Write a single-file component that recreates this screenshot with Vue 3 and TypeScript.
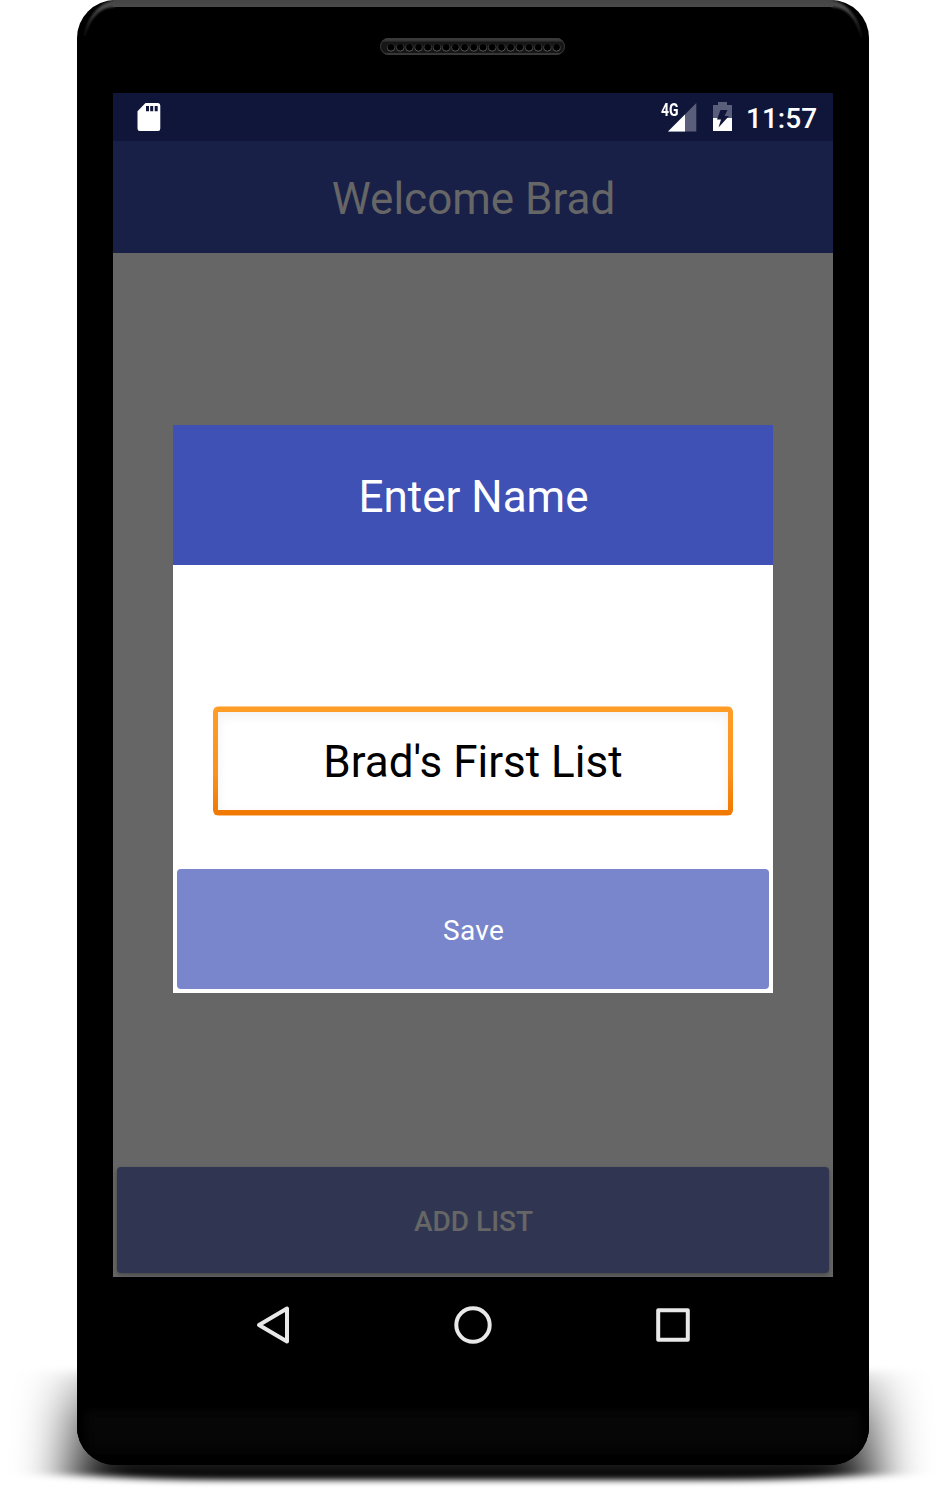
<script setup lang="ts">
import { ref } from 'vue'

const userName = ref('Brad')
const listName = ref("Brad's First List")
const speakerHoles: number[] = Array.from({ length: 19 }, (_, i) => 11 + i * 9.2)
</script>

<template>
  <main class="stage">
    <svg class="ground-shadow" width="945" height="190" viewBox="0 0 945 190" aria-hidden="true">
      <defs>
        <linearGradient id="fall" x1="0" y1="66" x2="0" y2="180" gradientUnits="userSpaceOnUse">
          <stop offset="0" stop-color="#000" stop-opacity="0.04" />
          <stop offset="0.15" stop-color="#000" stop-opacity="0.28" />
          <stop offset="0.5" stop-color="#000" stop-opacity="0.66" />
          <stop offset="1" stop-color="#000" stop-opacity="1" />
        </linearGradient>
        <filter id="soften" x="-100" y="0" width="1145" height="190" filterUnits="userSpaceOnUse">
          <feGaussianBlur stdDeviation="27 3.2" />
        </filter>
      </defs>
      <path d="M73 70 H872 V174 C800 181 740 180 680 180 H265 C205 180 145 181 73 174Z" fill="url(#fall)" filter="url(#soften)" />
    </svg>

    <div class="phone">
      <svg class="rim" width="792" height="50" viewBox="0 0 792 50" aria-hidden="true">
        <defs>
          <linearGradient id="rimFill" x1="0" y1="0" x2="0" y2="44" gradientUnits="userSpaceOnUse">
            <stop offset="0" stop-color="#444" />
            <stop offset="0.18" stop-color="#4b4b4b" />
            <stop offset="0.5" stop-color="#303030" />
            <stop offset="1" stop-color="#000" />
          </linearGradient>
          <filter id="rimBlur"><feGaussianBlur stdDeviation="0.8" /></filter>
        </defs>
        <path d="M36 0H756V7H36Z" fill="url(#rimFill)" />
        <path d="M38 0C24 1 7 18 7 42C11 21 21 7 38 7Z" fill="url(#rimFill)" filter="url(#rimBlur)" />
        <path d="M754 0C768 1 785 18 785 42C781 21 771 7 754 7Z" fill="url(#rimFill)" filter="url(#rimBlur)" />
      </svg>

      <div class="speaker">
        <svg width="185" height="17" viewBox="0 0 185 17" aria-hidden="true">
          <defs>
            <linearGradient id="slot" x1="0" y1="0" x2="0" y2="1">
              <stop offset="0" stop-color="#444" />
              <stop offset="0.18" stop-color="#303030" />
              <stop offset="0.25" stop-color="#161616" />
              <stop offset="0.85" stop-color="#151515" />
              <stop offset="0.92" stop-color="#3c3c3c" />
              <stop offset="1" stop-color="#2a2a2a" />
            </linearGradient>
            <linearGradient id="hole" x1="0" y1="0" x2="0" y2="1">
              <stop offset="0" stop-color="#1c1c1c" />
              <stop offset="1" stop-color="#5a5a5a" />
            </linearGradient>
          </defs>
          <rect width="185" height="17" rx="8.5" fill="url(#slot)" />
          <rect x="0.5" y="0.5" width="184" height="16" rx="8" fill="none" stroke="#383838" />
          <circle
            v-for="x in speakerHoles"
            :key="x"
            :cx="x"
            cy="9.3"
            r="3.9"
            fill="#000"
            stroke="url(#hole)"
            stroke-width="1"
          />
        </svg>
      </div>

      <section class="screen">
        <div class="status-bar">
          <svg class="sd" width="24" height="28" viewBox="0 0 24 28" aria-hidden="true">
            <path fill="#fff" fill-rule="evenodd" d="M8.500 0H21Q23.300 0 23.300 2.500V25.500Q23.300 28 21 28H2.800Q0.500 28 0.500 25.500V8.300ZM9 3V8.300H12V3ZM13.200 3V8.300H16.200V3ZM17.700 3V8.300H20.700V3Z" />
          </svg>
          <div class="signal">
            <svg width="29" height="29" viewBox="0 0 29 29" aria-hidden="true">
              <path d="M28.300 0V28.500H0Z" fill="#5b5e7b" />
              <path d="M17 11.400V28.500H0Z" fill="#fff" />
            </svg>
            <span class="network">4G</span>
          </div>
          <svg class="battery" width="19" height="29" viewBox="0 0 19 29" aria-hidden="true">
            <path d="M5 0H14V3H19V16H0V3H5Z" fill="#5b5e7b" />
            <path d="M0 16H19V29H0Z" fill="#fff" />
            <path d="M7.500 8H14.500L11.500 14H16L5.500 25.500L8 17.500H4Z" fill="#10163a" />
          </svg>
          <time class="clock">11:57</time>
        </div>

        <header class="app-bar">Welcome {{ userName }}</header>

        <div class="content">
          <div class="dialog">
            <h2 class="dialog-title">Enter Name</h2>
            <div class="dialog-body">
              <div class="field"><input v-model="listName" type="text" aria-label="Name" /></div>
            </div>
            <button class="save" type="button">Save</button>
          </div>
        </div>

        <div class="footer"><button class="add" type="button">ADD LIST</button></div>
      </section>

      <nav class="nav-bar">
        <svg width="40" height="40" viewBox="0 0 40 40" aria-hidden="true">
          <path d="M6 20L34 3.500V36.500Z" />
        </svg>
        <svg width="40" height="40" viewBox="0 0 40 40" aria-hidden="true">
          <circle cx="20" cy="20" r="16.700" />
        </svg>
        <svg width="40" height="40" viewBox="0 0 40 40" aria-hidden="true">
          <rect x="5.200" y="5.200" width="29.600" height="29.600" />
        </svg>
      </nav>
      <div class="chin"></div>
    </div>
  </main>
</template>

<style>
body {
  margin: 0;
  background: #fff;
}
</style>

<style scoped>
.stage {
  position: relative;
  width: 945px;
  height: 1490px;
  overflow: hidden;
  background: #fff;
  font-family: Roboto, "Noto Sans", sans-serif;
}
.ground-shadow {
  position: absolute;
  left: 0;
  top: 1300px;
}
.phone {
  position: relative;
  display: flex;
  flex-direction: column;
  align-items: center;
  width: 792px;
  height: 1465px;
  margin-left: 77px;
  overflow: hidden;
  border-radius: 38px;
  background: #000;
}
.rim {
  position: absolute;
  top: 0;
  left: 0;
}
.speaker {
  height: 55px;
  padding-top: 38px;
  box-sizing: border-box;
  margin-bottom: 38px;
  margin-left: -1px;
}
.speaker svg {
  display: block;
}
.screen {
  display: flex;
  flex-direction: column;
  width: 720px;
  height: 1184px;
  background: #666;
}
.status-bar {
  display: flex;
  align-items: flex-start;
  height: 48px;
  box-sizing: border-box;
  padding: 9px 16px 0 24px;
  background: #10163a;
  color: #fff;
}
.sd {
  margin: 1px auto 0 0;
}
.signal {
  position: relative;
  height: 29px;
  margin-right: 16px;
}
.signal svg {
  display: block;
  margin-top: 1px;
}
.network {
  position: absolute;
  left: -7px;
  top: 0;
  font-size: 17.500px;
  line-height: 17px;
  font-weight: 700;
  transform: scaleX(0.8);
  transform-origin: left;
}
.battery {
  margin-right: 14px;
}
.clock {
  width: 71px;
  font-size: 28px;
  line-height: 33px;
  font-weight: 500;
  white-space: nowrap;
}
.app-bar {
  height: 112px;
  box-sizing: border-box;
  padding: 2px 0 0 1px;
  background: #192047;
  color: #666;
  font-size: 44px;
  line-height: 112px;
  text-align: center;
}
.content {
  height: 910px;
  display: flex;
  justify-content: center;
  align-items: flex-start;
  padding-top: 172px;
  box-sizing: border-box;
}
.dialog {
  display: flex;
  flex-direction: column;
  width: 600px;
  height: 568px;
  background: #fff;
}
.dialog-title {
  height: 140px;
  box-sizing: border-box;
  margin: 0;
  padding: 2px 0 0 1px;
  background: #3f51b5;
  color: #fff;
  font-size: 44px;
  font-weight: 400;
  line-height: 140px;
  text-align: center;
}
.dialog-body {
  height: 304px;
  box-sizing: border-box;
  padding: 141px 40px 0;
}
.field {
  height: 110px;
  box-sizing: border-box;
  padding: 6px 5px;
  border-radius: 6px;
  background: linear-gradient(#ffc98a 1px, #ff9d27 1px, #fb9220 60%, #f07800 109px, #f9bf85 109px);
}
.field input {
  display: block;
  width: 100%;
  height: 98px;
  box-sizing: border-box;
  margin: 0;
  padding: 2px 0 0;
  border: 0;
  outline: 0;
  border-radius: 0;
  background: #fff;
  box-shadow: inset 0 4px 12px rgba(0, 0, 0, 0.06);
  color: #000;
  font: 400 44px Roboto, "Noto Sans", sans-serif;
  text-align: center;
}
.save,
.add {
  display: block;
  border: 0;
  border-radius: 4px;
  font-family: Roboto, "Noto Sans", sans-serif;
  font-size: 28px;
}
.save {
  width: 592px;
  height: 120px;
  margin: 0 4px;
  padding: 2px 0 0 1px;
  background: #7986cb;
  color: #fff;
  letter-spacing: 0.300px;
}
.footer {
  height: 114px;
  box-sizing: border-box;
  padding: 4px;
  overflow: hidden;
}
.add {
  width: 712px;
  height: 106px;
  padding: 2px 0 0 1px;
  background: #303651;
  color: #666;
  font-weight: 500;
  box-shadow: 0 2px 4px rgba(0, 0, 0, 0.3);
}
.nav-bar {
  display: flex;
  gap: 160px;
  height: 96px;
  align-items: center;
}
.nav-bar svg {
  fill: none;
  stroke: #e8e8e8;
  stroke-width: 4;
  stroke-linejoin: round;
}
.chin {
  width: 100%;
  height: 58px;
  margin-top: auto;
  background: linear-gradient(#070707, #060606 60%, #000);
  box-shadow: inset 8px 0 8px #000, inset -8px 0 8px #000;
}
</style>
